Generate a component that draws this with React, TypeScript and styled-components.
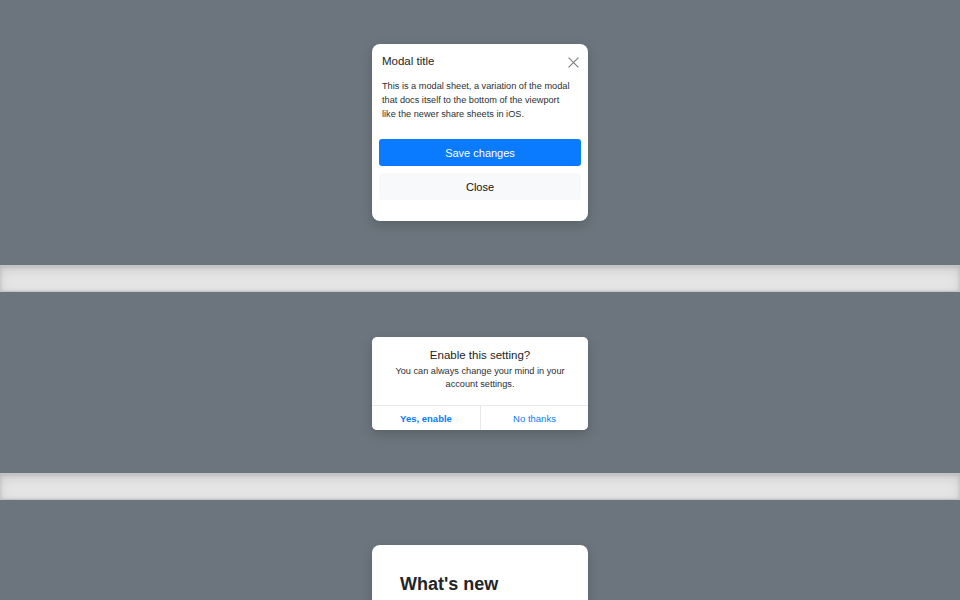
import styled, { createGlobalStyle } from 'styled-components';

const GlobalStyle = createGlobalStyle`
  html, body {
    margin: 0;
    padding: 0;
    background: #fff;
    font-family: "Liberation Sans", Arial, sans-serif;
    color: #212529;
  }
  * { box-sizing: border-box; }
`;

const Page = styled.div`
  display: flex;
  flex-direction: column;
`;

const Section = styled.section<{ $pt: number; $pb: number }>`
  background: #6c757d;
  display: flex;
  justify-content: center;
  padding: ${(p) => p.$pt}px 0 ${(p) => p.$pb}px;
`;

const Divider = styled.div`
  height: 27px;
  background-color: rgba(0, 0, 0, 0.1);
  border: solid rgba(0, 0, 0, 0.15);
  border-width: 1px 0;
  box-shadow: inset 0 4px 12px rgba(0, 0, 0, 0.1),
    inset 0 1px 4px rgba(0, 0, 0, 0.15);
`;

const Card = styled.div`
  width: 216px;
  background: #fff;
  border-radius: 8px;
  box-shadow: 0 4px 12px rgba(0, 0, 0, 0.18);
  overflow: hidden;
`;

const SmallCard = styled(Card)`
  border-radius: 5px;
`;

const Header = styled.div`
  display: flex;
  align-items: flex-start;
  justify-content: space-between;
  padding: 10px 9px 0 10px;
  height: 24px;
`;

const Title = styled.h1`
  margin: 0;
  font-size: 11.5px;
  line-height: 14px;
  font-weight: 400;
  color: #212529;
`;

const CloseBtn = styled.button`
  border: 0;
  background: transparent;
  padding: 0;
  margin-top: 3px;
  width: 11px;
  height: 11px;
  display: flex;
  align-items: center;
  justify-content: center;
  color: #7a7d80;
  cursor: pointer;
`;

const Body = styled.div`
  padding: 11px 15px 0 10px;
  p {
    margin: 0;
    font-size: 9.2px;
    line-height: 14px;
    color: #2b2f33;
  }
`;

const Footer = styled.div`
  display: flex;
  flex-direction: column;
  gap: 7px;
  padding: 18px 7px 21px;
`;

const Btn = styled.button<{ $primary?: boolean }>`
  height: 27px;
  border: 0;
  border-radius: 3px;
  font-family: inherit;
  font-size: 11px;
  background: ${(p) => (p.$primary ? '#0a7bff' : '#f8f9fa')};
  color: ${(p) => (p.$primary ? '#fff' : '#111')};
  cursor: pointer;
`;

const AlertBody = styled.div`
  padding: 11px 12px 14px;
  text-align: center;
  h2 {
    margin: 0;
    font-size: 11.5px;
    line-height: 15px;
    font-weight: 400;
    color: #212529;
  }
  p {
    margin: 2px 0 0;
    font-size: 9.2px;
    line-height: 13px;
    color: #2b2f33;
  }
`;

const AlertActions = styled.div`
  display: grid;
  grid-template-columns: 1fr 1fr;
  border-top: 1px solid #e6e8ea;
`;

const AlertBtn = styled.button<{ $bold?: boolean }>`
  height: 24px;
  border: 0;
  background: #fff;
  font-family: inherit;
  font-size: 9.5px;
  font-weight: ${(p) => (p.$bold ? 700 : 400)};
  color: #0a7bff;
  cursor: pointer;
  & + & {
    border-left: 1px solid #e6e8ea;
  }
`;

const TourCard = styled(Card)`
  padding: 28px 28px 40px;
  h2 {
    margin: 0;
    font-size: 18px;
    line-height: 22px;
    font-weight: 700;
    color: #212529;
  }
`;

export default function App() {
  return (
    <Page>
      <GlobalStyle />
      <Section $pt={44} $pb={44}>
        <Card>
          <Header>
            <Title>Modal title</Title>
            <CloseBtn aria-label="Close">
              <svg width="11" height="11" viewBox="0 0 10 10">
                <path d="M0.5 0.5 L9.5 9.5 M9.5 0.5 L0.5 9.5" stroke="currentColor" strokeWidth="1" />
              </svg>
            </CloseBtn>
          </Header>
          <Body>
            <p>
              This is a modal sheet, a variation of the modal that docs itself to the bottom of the
              viewport like the newer share sheets in iOS.
            </p>
          </Body>
          <Footer>
            <Btn $primary>Save changes</Btn>
            <Btn>Close</Btn>
          </Footer>
        </Card>
      </Section>
      <Divider />
      <Section $pt={45} $pb={43}>
        <SmallCard>
          <AlertBody>
            <h2>Enable this setting?</h2>
            <p>You can always change your mind in your account settings.</p>
          </AlertBody>
          <AlertActions>
            <AlertBtn $bold>Yes, enable</AlertBtn>
            <AlertBtn>No thanks</AlertBtn>
          </AlertActions>
        </SmallCard>
      </Section>
      <Divider />
      <Section $pt={45} $pb={45}>
        <TourCard>
          <h2>What's new</h2>
        </TourCard>
      </Section>
    </Page>
  );
}
